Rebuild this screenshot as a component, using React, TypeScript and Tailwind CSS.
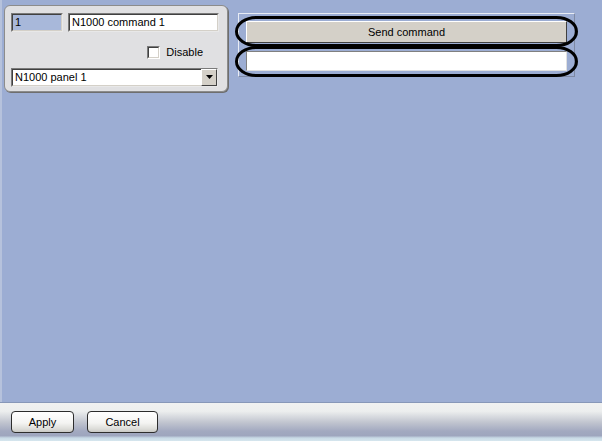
import React from "react";

function Field({ value, className }: { value: string; className: string }) {
  return (
    <div
      className={`flex h-[19px] items-center border border-t-[#7a7a7a] border-l-[#7a7a7a] border-r-[#e8e8e8] border-b-[#e8e8e8] ${className}`}
    >
      <div className="flex h-full w-full items-center border border-t-[#404040] border-l-[#404040] border-r-[#d4d0c8] border-b-[#d4d0c8] pl-[2px] leading-none">
        {value}
      </div>
    </div>
  );
}

function WinButton({ label, className }: { label: string; className: string }) {
  return (
    <button
      className={`flex h-[22px] items-center justify-center rounded-[4px] border border-[#2c2c2c] bg-[linear-gradient(to_bottom,#ffffff_0%,#f4f4f2_55%,#dcdcd8_85%,#c8c8c4_100%)] text-[11px] text-black ${className}`}
    >
      {label}
    </button>
  );
}

export default function App() {
  return (
    <div className="flex h-[441px] w-[602px] flex-col bg-[#9cadd3] font-['Liberation_Sans',Arial,sans-serif] text-[11px] text-black">
      {/* Content */}
      <div className="flex flex-1 items-start border-l-2 border-[#b6c2dc] pl-[2px] pt-[5px]">
        {/* Left properties panel */}
        <div className="flex h-[87px] w-[224px] flex-col rounded-[6px] border border-[#8c8c8c] bg-[#e0e0e2] px-[6px] pt-[7px] shadow-[1px_1px_0_#6e6e6e]">
          <div className="flex gap-[5px]">
            <Field value="1" className="w-[52px] bg-[#a8b8da]" />
            <Field value="N1000 command 1" className="w-[151px] bg-white" />
          </div>
          <div className="mt-[12px] flex items-center justify-end pr-[18px]">
            <div className="h-[13px] w-[13px] border border-t-[#7a7a7a] border-l-[#7a7a7a] border-r-white border-b-white bg-white">
              <div className="h-full w-full border border-t-[#404040] border-l-[#404040] border-r-[#d4d0c8] border-b-[#d4d0c8]" />
            </div>
            <span className="ml-[6px]">Disable</span>
          </div>
          <div className="mt-[7px] flex h-[19px] w-[207px] items-center border border-t-[#7a7a7a] border-l-[#7a7a7a] border-r-[#e8e8e8] border-b-[#e8e8e8] bg-white">
            <div className="flex h-full flex-1 items-center border-y border-l border-t-[#404040] border-l-[#404040] border-b-[#d4d0c8] pl-[2px] leading-none">
              N1000 panel 1
            </div>
            <div className="flex h-full w-[16px] items-center justify-center border border-t-white border-l-white border-r-[#404040] border-b-[#404040] bg-[#d4d0c8]">
              <svg width="7" height="4" viewBox="0 0 7 4">
                <path d="M0 0H7L3.5 4Z" fill="#000" />
              </svg>
            </div>
          </div>
        </div>

        {/* Right command panel */}
        <div className="relative ml-[10px] mt-[8px] flex h-[64px] w-[337px] flex-col border border-t-[#e8ecf4] border-l-[#e8ecf4] border-r-[#7f8aa4] border-b-[#7f8aa4] px-[7px] pt-[7px]">
          <div className="flex h-[22px] w-[321px] items-center justify-center border border-t-white border-l-white border-r-[#404040] border-b-[#404040] bg-[#d4d0c8]">
            Send command
          </div>
          <div className="mt-[8px] h-[20px] w-[321px] border border-t-[#808080] border-l-[#808080] border-r-[#e0e0e0] border-b-[#e0e0e0] bg-white" />
          <svg
            className="pointer-events-none absolute left-[-4px] top-[2px]"
            width="344"
            height="62"
            viewBox="0 0 344 62"
          >
            <rect x="1.5" y="1.5" width="340" height="28" rx="20" ry="14" fill="none" stroke="#000" strokeWidth="3" />
            <rect x="1.5" y="31.5" width="340" height="28" rx="20" ry="14" fill="none" stroke="#000" strokeWidth="3" />
          </svg>
        </div>
      </div>

      {/* Bottom bar */}
      <div className="flex h-[39px] items-start border-t border-[#8797b8] bg-[linear-gradient(to_bottom,#f0f1f1_0%,#eceeee_22%,#c2c6d0_50%,#a2a9c0_74%,#9ea6be_86%,#c8dae6_92%,#d6e6ee_100%)] pt-[8px]">
        <WinButton label="Apply" className="ml-[11px] w-[63px]" />
        <WinButton label="Cancel" className="ml-[13px] w-[71px]" />
      </div>
    </div>
  );
}
